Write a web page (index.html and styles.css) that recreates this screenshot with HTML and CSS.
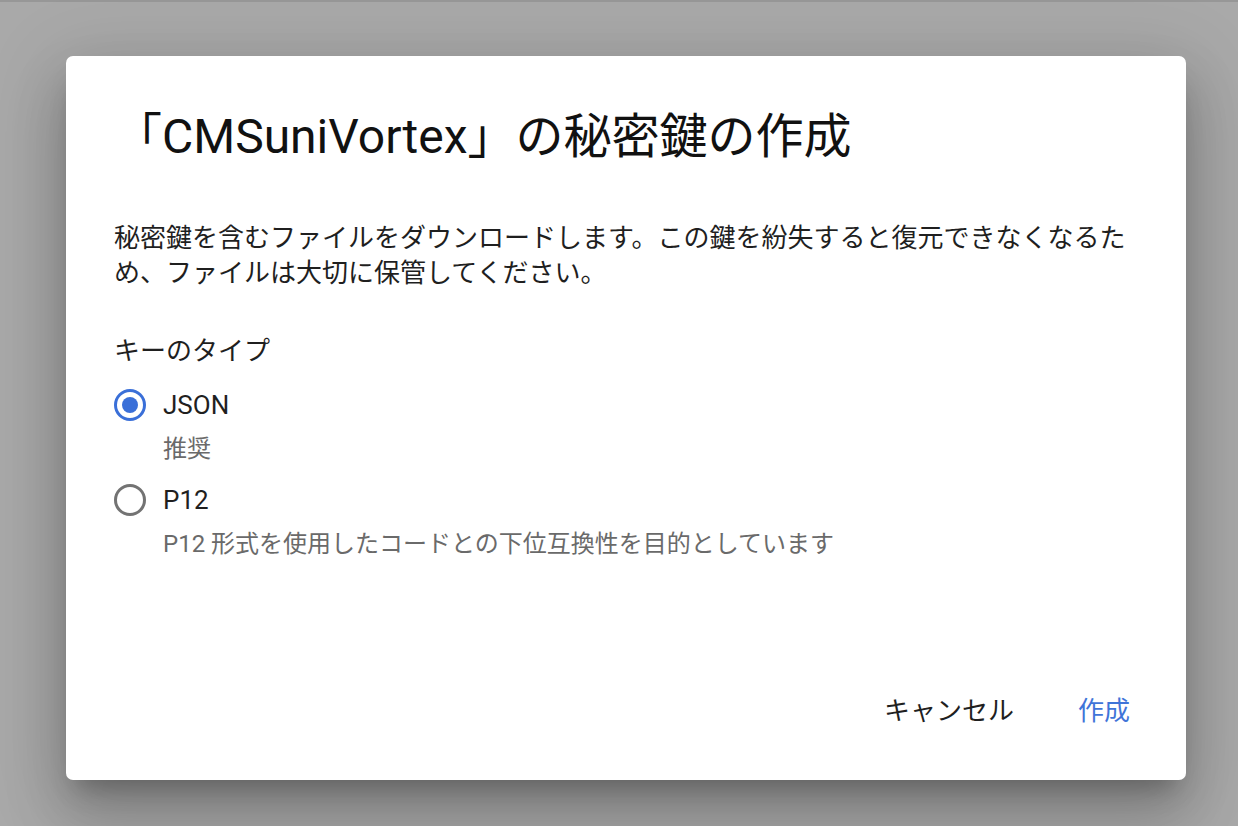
FILE: index.html
```html
<!DOCTYPE html>
<html lang="ja">
<head>
<meta charset="utf-8">
<title>秘密鍵の作成</title>
<link rel="stylesheet" href="styles.css">
</head>
<body>
<div class="scrim">
  <div class="dialog">
    <h1 class="title">「CMSuniVortex」の秘密鍵の作成</h1>
    <p class="intro">秘密鍵を含むファイルをダウンロードします。この鍵を紛失すると復元できなくなるため、ファイルは大切に保管してください。</p>
    <div class="group-label">キーのタイプ</div>
    <div class="option">
      <div class="radio-row">
        <span class="radio checked"><span class="dot"></span></span>
        <span class="opt-label">JSON</span>
      </div>
      <div class="opt-desc">推奨</div>
    </div>
    <div class="option">
      <div class="radio-row">
        <span class="radio"></span>
        <span class="opt-label">P12</span>
      </div>
      <div class="opt-desc">P12 形式を使用したコードとの下位互換性を目的としています</div>
    </div>
    <div class="spacer"></div>
    <div class="actions">
      <button class="btn">キャンセル</button>
      <button class="btn primary">作成</button>
    </div>
  </div>
</div>
</body>
</html>
```

FILE: styles.css
```css
html, body {
  margin: 0;
  padding: 0;
  height: 100%;
}
body {
  background: #a9a9a9;
  font-family: Roboto, "Noto Sans CJK JP", sans-serif;
  overflow: hidden;
}
.scrim {
  height: 826px;
  box-sizing: border-box;
  border-top: 2px solid #979797;
  padding: 54px 0 0 66px;
}
.dialog {
  width: 1120px;
  height: 724px;
  box-sizing: border-box;
  background: #fff;
  border-radius: 7px;
  padding: 53px 48px 40px 48px;
  display: flex;
  flex-direction: column;
  box-shadow: 0 18px 24px -11px rgba(0,0,0,0.25),
              0 38px 60px 5px rgba(0,0,0,0.16),
              0 14px 74px 13px rgba(0,0,0,0.12);
}
.title {
  margin: 0;
  font-size: 48px;
  line-height: 56px;
  font-weight: 400;
  color: #111;
}
.intro {
  margin: 56px 0 0 0;
  font-size: 26px;
  line-height: 35px;
  color: #1f1f1f;
}
.group-label {
  margin-top: 42px;
  font-size: 26px;
  line-height: 36px;
  color: #1f1f1f;
}
.option {
  margin-top: 18px;
}
.option + .option {
  margin-top: 17px;
}
.radio-row {
  display: flex;
  align-items: center;
  gap: 17px;
  height: 36px;
}
.radio {
  width: 32px;
  height: 32px;
  box-sizing: border-box;
  border: 3.3px solid #737373;
  border-radius: 50%;
  display: flex;
  align-items: center;
  justify-content: center;
  flex: none;
}
.radio.checked {
  border-color: #3a6fd8;
}
.dot {
  width: 16px;
  height: 16px;
  border-radius: 50%;
  background: #3a6fd8;
}
.opt-label {
  font-size: 26px;
  line-height: 36px;
  color: #1f1f1f;
}
.opt-desc {
  margin: 10px 0 0 49px;
  font-size: 24px;
  line-height: 32px;
  color: #6a6a6a;
}
.spacer {
  flex: 1;
}
.actions {
  display: flex;
  justify-content: flex-end;
  gap: 38px;
  margin-right: -5px;
}
.btn {
  font-family: Roboto, "Noto Sans CJK JP", sans-serif;
  font-size: 26px;
  line-height: 36px;
  background: none;
  border: none;
  padding: 11px 13px;
  color: #1f1f1f;
  cursor: pointer;
}
.btn.primary {
  color: #3f74d8;
}
```
